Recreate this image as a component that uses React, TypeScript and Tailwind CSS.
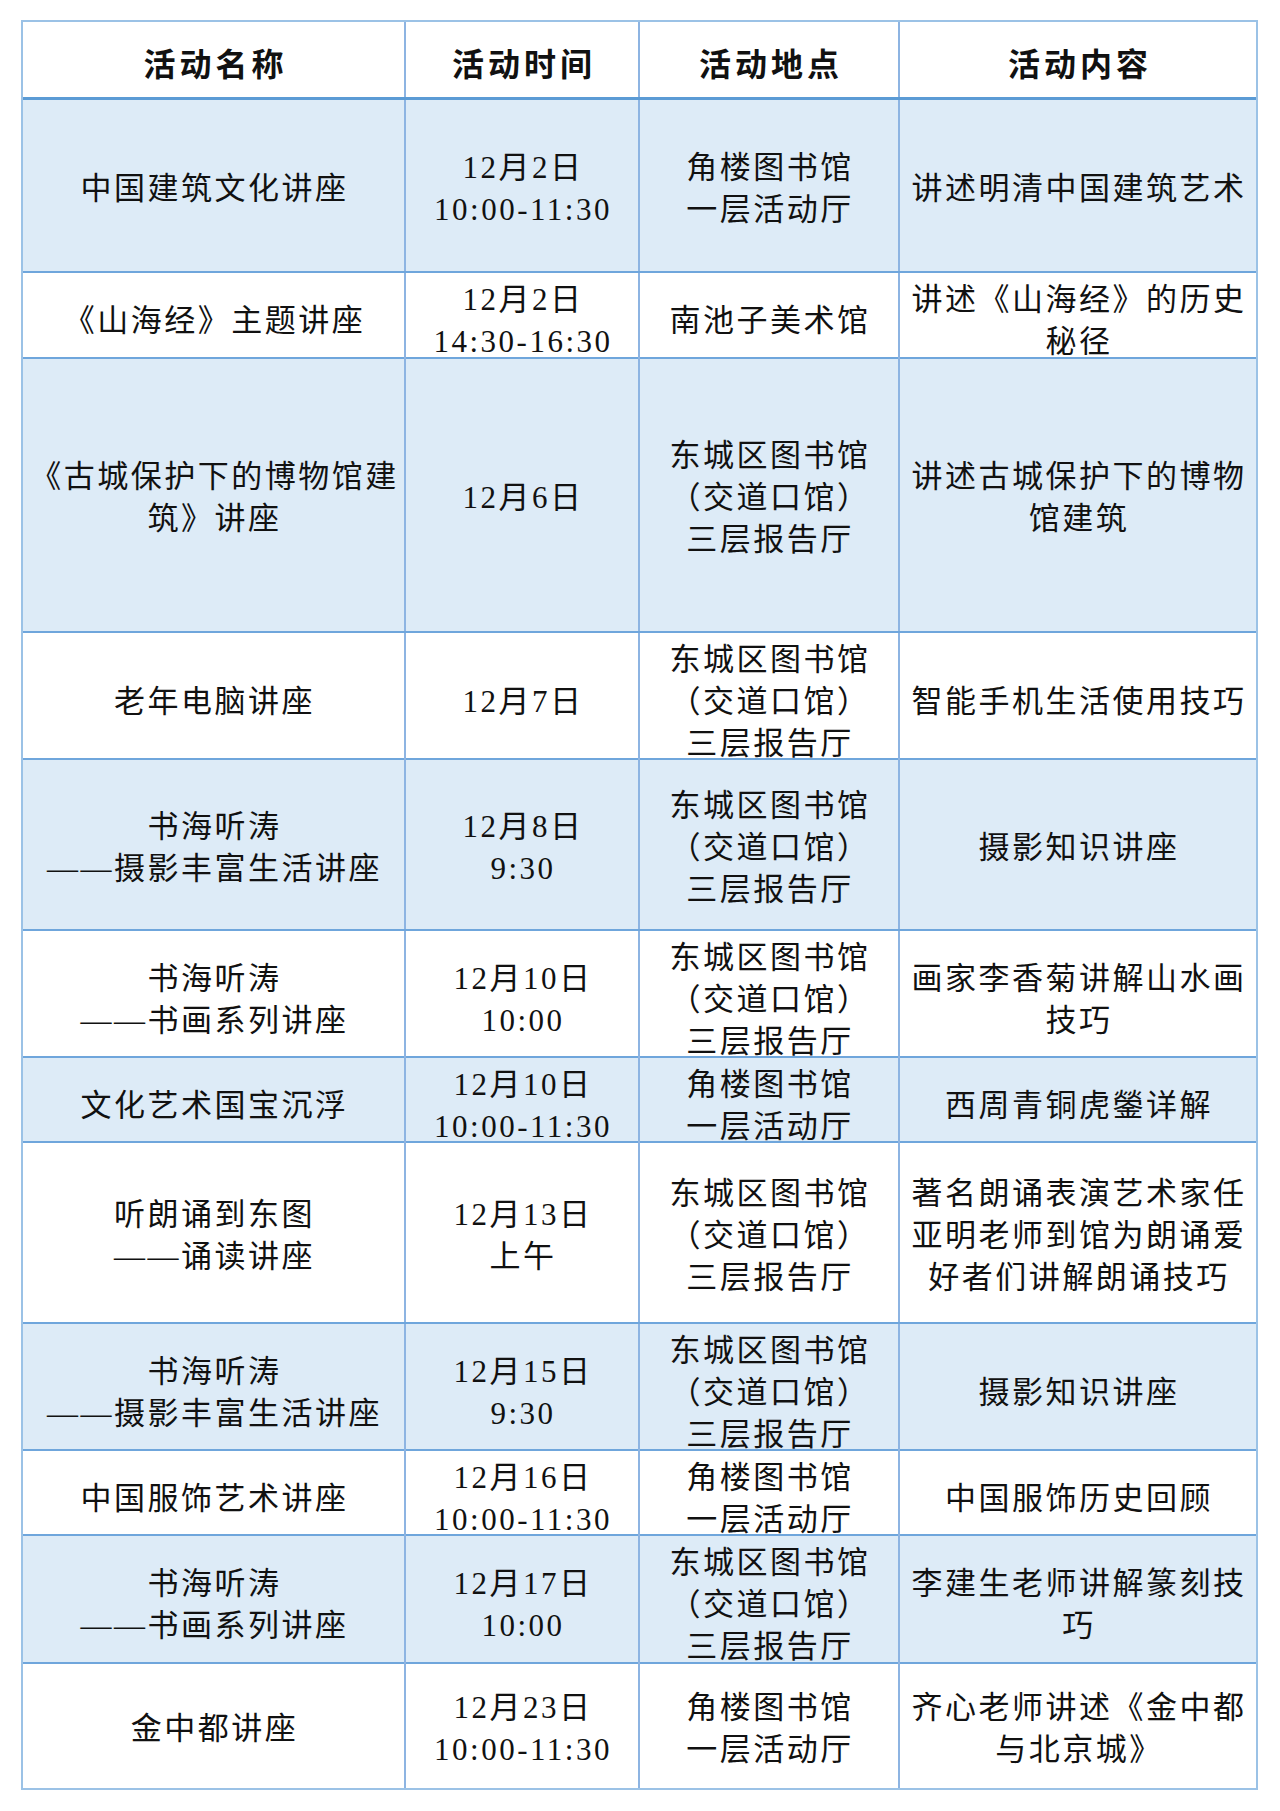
import React from "react";

type Row = { h: string; blue: boolean; cells: string[][] };

const DC = ["东城区图书馆", "（交道口馆）", "三层报告厅"];
const JL = ["角楼图书馆", "一层活动厅"];

const rows: Row[] = [
  { h: "h-[173px]", blue: true, cells: [["中国建筑文化讲座"], ["12月2日", "10:00-11:30"], JL, ["讲述明清中国建筑艺术"]] },
  { h: "h-[86px]", blue: false, cells: [["《山海经》主题讲座"], ["12月2日", "14:30-16:30"], ["南池子美术馆"], ["讲述《山海经》的历史", "秘径"]] },
  { h: "h-[274px]", blue: true, cells: [["《古城保护下的博物馆建", "筑》讲座"], ["12月6日"], DC, ["讲述古城保护下的博物", "馆建筑"]] },
  { h: "h-[127px]", blue: false, cells: [["老年电脑讲座"], ["12月7日"], DC, ["智能手机生活使用技巧"]] },
  { h: "h-[171px]", blue: true, cells: [["书海听涛", "——摄影丰富生活讲座"], ["12月8日", "9:30"], DC, ["摄影知识讲座"]] },
  { h: "h-[127px]", blue: false, cells: [["书海听涛", "——书画系列讲座"], ["12月10日", "10:00"], DC, ["画家李香菊讲解山水画", "技巧"]] },
  { h: "h-[85px]", blue: true, cells: [["文化艺术国宝沉浮"], ["12月10日", "10:00-11:30"], JL, ["西周青铜虎鎣详解"]] },
  { h: "h-[181px]", blue: false, cells: [["听朗诵到东图", "——诵读讲座"], ["12月13日", "上午"], DC, ["著名朗诵表演艺术家任", "亚明老师到馆为朗诵爱", "好者们讲解朗诵技巧"]] },
  { h: "h-[127px]", blue: true, cells: [["书海听涛", "——摄影丰富生活讲座"], ["12月15日", "9:30"], DC, ["摄影知识讲座"]] },
  { h: "h-[85px]", blue: false, cells: [["中国服饰艺术讲座"], ["12月16日", "10:00-11:30"], JL, ["中国服饰历史回顾"]] },
  { h: "h-[128px]", blue: true, cells: [["书海听涛", "——书画系列讲座"], ["12月17日", "10:00"], DC, ["李建生老师讲解篆刻技", "巧"]] },
  { h: "h-[124px]", blue: false, cells: [["金中都讲座"], ["12月23日", "10:00-11:30"], JL, ["齐心老师讲述《金中都", "与北京城》"]] },
];

const headers = ["活动名称", "活动时间", "活动地点", "活动内容"];
const cols = "grid grid-cols-[383px_234px_260px_356px]";

function Cell({ lines, last }: { lines: string[]; last: boolean }) {
  return (
    <div
      className={`flex flex-col items-center justify-center overflow-visible pt-[6px] ${
        last ? "" : "border-r-2 border-[#8db4e2]"
      }`}
    >
      {lines.map((l, i) => (
        <div
          key={i}
          className="relative z-10 whitespace-nowrap pl-[2px] text-[31px] leading-[42px] tracking-[2.5px] text-[#111]"
        >
          {l}
        </div>
      ))}
    </div>
  );
}

export default function App() {
  return (
    <div className="min-h-[1811px] w-[1280px] bg-white pt-[20px] font-['Liberation_Serif','Noto_Sans_CJK_SC',serif]">
      <div className="ml-[21px] w-[1237px] border-2 border-[#9bc2e6]">
        <div className={`${cols} h-[78px] border-b-[3px] border-[#5b9bd5]`}>
          {headers.map((t, i) => (
            <div
              key={t}
              className={`flex items-center justify-center pt-[4px] ${i < 3 ? "border-r-2 border-[#8db4e2]" : ""}`}
            >
              <span className="pl-[4px] font-['Noto_Sans_CJK_SC',sans-serif] text-[32px] font-bold tracking-[4px] text-[#111]">
                {t}
              </span>
            </div>
          ))}
        </div>
        {rows.map((r, ri) => (
          <div
            key={ri}
            className={`${cols} ${r.h} ${r.blue ? "bg-[#ddebf7]" : "bg-white"} ${
              ri < rows.length - 1 ? "border-b-2 border-[#6fa6dc]" : ""
            }`}
          >
            {r.cells.map((c, ci) => (
              <Cell key={ci} lines={c} last={ci === 3} />
            ))}
          </div>
        ))}
      </div>
    </div>
  );
}
